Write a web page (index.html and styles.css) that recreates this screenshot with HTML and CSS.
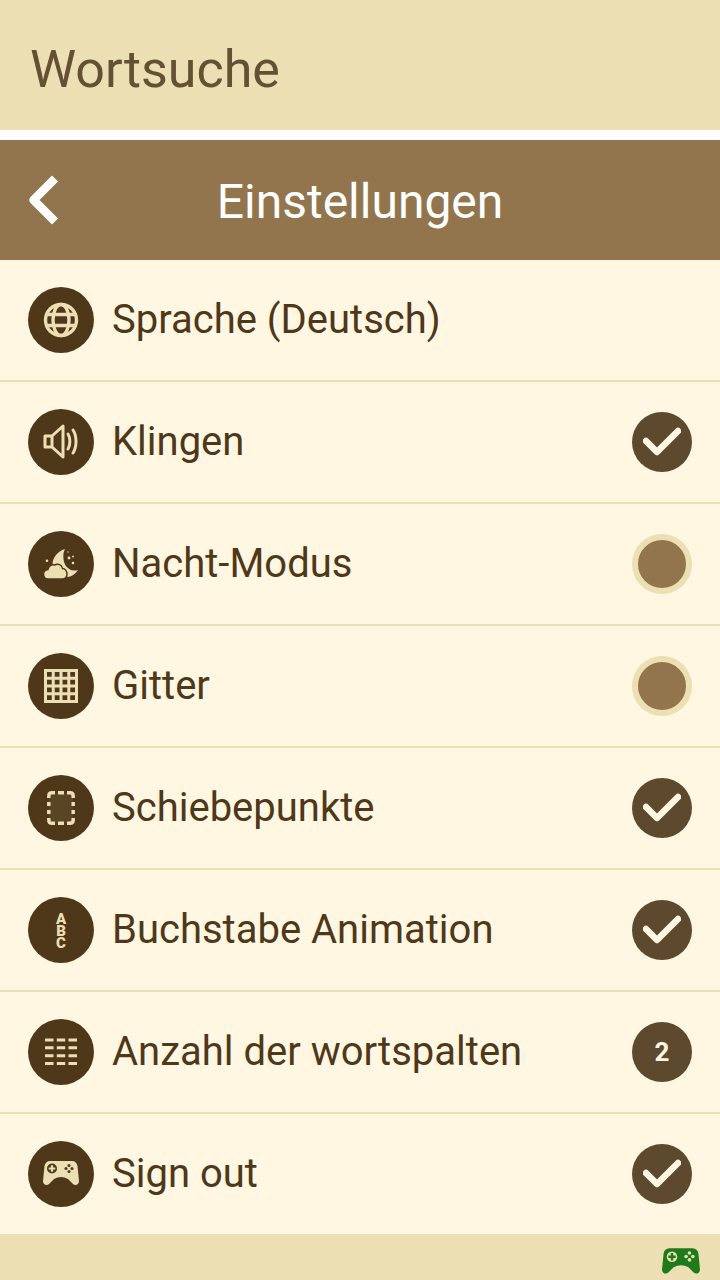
FILE: index.html
```html
<!DOCTYPE html>
<html lang="de">
<head>
<meta charset="UTF-8">
<meta name="viewport" content="width=device-width, initial-scale=1.0">
<title>Wortsuche</title>
<link rel="stylesheet" href="styles.css">
</head>
<body>

<div class="app-title">Wortsuche</div>

<div class="header">
    <svg class="back" width="36" height="52" viewBox="0 0 36 52"><path d="M31 4.500 L9.500 26 L31 47.500" fill="none" stroke="#fff" stroke-width="8.500" stroke-linejoin="round"/></svg>
    <div class="header-title">Einstellungen</div>
</div>

<div class="list">
    <div class="row">
        <div class="icon">
            <svg width="36" height="36" viewBox="0 0 36 36" fill="none" stroke="#ebdfb3" stroke-width="3.400">
                <circle cx="18" cy="18" r="15.500"/>
                <ellipse cx="18" cy="18" rx="8" ry="15.500"/>
                <path d="M3.500 12.500H32.500M3.500 23.500H32.500"/>
            </svg>
        </div>
        <div class="label">Sprache (Deutsch)</div>
    </div>
    <div class="row">
        <div class="icon">
            <svg width="36" height="36" viewBox="0 0 36 36" fill="none" stroke="#ebdfb3" stroke-width="3" stroke-linejoin="round" stroke-linecap="round">
                <path d="M2 12H9V23H2ZM9 12L20 2V33L9 23"/>
                <path d="M25 10C27.500 14 27.500 21 25 25M30 6C34 12 34 23 30 29"/>
            </svg>
        </div>
        <div class="label">Klingen</div>
        <div class="check"><svg width="38" height="30" viewBox="0 0 38 30"><path d="M3 14L14 25L35 4" fill="none" stroke="#fff7e2" stroke-width="6.500" stroke-linecap="round" stroke-linejoin="round"/></svg></div>
    </div>
    <div class="row">
        <div class="icon">
            <svg width="36" height="32" viewBox="0 0 36 32" fill="#ebdfb3">
                <path d="M22 1C13 4 8 12 10 20C13 29 27 34 35 22C28 24 23 20 21 14C20 9 20 5 22 1Z"/>
                <path d="M5 31C2 31 .500 29 .500 26C.500 23.500 2.500 22 5 21.500C5.500 18 8.500 16 11.500 17C15 15 19 17 19.500 20.500C22 20.500 24 23 24 26C24 29 22 31 19 31Z" stroke="#4f381a" stroke-width="1.500"/>
                <circle cx="4" cy="12.700" r="1.300"/><circle cx="26" cy="10" r="1.400"/><circle cx="30" cy="8.500" r=".9"/><circle cx="30" cy="15" r="1.300"/><circle cx="25" cy="4" r=".7"/>
            </svg>
        </div>
        <div class="label">Nacht-Modus</div>
        <div class="toggle-off"></div>
    </div>
    <div class="row">
        <div class="icon">
            <svg width="34" height="34" viewBox="0 0 34 34" fill="none" stroke="#ebdfb3" stroke-width="3">
                <path d="M1.500 1.500H32.500V32.500H1.500ZM9.250 1V33M17 1V33M24.750 1V33M1 9.250H33M1 17H33M1 24.750H33"/>
            </svg>
        </div>
        <div class="label">Gitter</div>
        <div class="toggle-off"></div>
    </div>
    <div class="row">
        <div class="icon">
            <svg width="28" height="34" viewBox="0 0 28 34" fill="none" stroke="#ebdfb3" stroke-width="3.500">
                <rect x="2" y="2" width="24" height="30" fill="#5a4426" stroke="none"/>
                <path d="M1.800 7V5Q1.800 1.800 5 1.800H8M11 1.800H17M20 1.800H23Q26.200 1.800 26.200 5V7M26.200 11V15M26.200 19V23M26.200 27V29Q26.200 32.200 23 32.200H20M17 32.200H11M8 32.200H5Q1.800 32.200 1.800 29V27M1.800 23V19M1.800 15V11"/>
            </svg>
        </div>
        <div class="label">Schiebepunkte</div>
        <div class="check"><svg width="38" height="30" viewBox="0 0 38 30"><path d="M3 14L14 25L35 4" fill="none" stroke="#fff7e2" stroke-width="6.500" stroke-linecap="round" stroke-linejoin="round"/></svg></div>
    </div>
    <div class="row">
        <div class="icon">
            <div class="abc">ABC</div>
        </div>
        <div class="label">Buchstabe Animation</div>
        <div class="check"><svg width="38" height="30" viewBox="0 0 38 30"><path d="M3 14L14 25L35 4" fill="none" stroke="#fff7e2" stroke-width="6.500" stroke-linecap="round" stroke-linejoin="round"/></svg></div>
    </div>
    <div class="row">
        <div class="icon">
            <svg width="34" height="28" viewBox="0 0 34 28" fill="#ebdfb3">
                <path d="M1 .5H9.500V3.500H1ZM12.800 .5H21.200V3.500H12.800ZM24.500 .5H33V3.500H24.500ZM1 8.300H9.500V11.300H1ZM12.800 8.300H21.200V11.300H12.800ZM24.500 8.300H33V11.300H24.500ZM1 16.200H9.500V19.200H1ZM12.800 16.200H21.200V19.200H12.800ZM24.500 16.200H33V19.200H24.500ZM1 24H9.500V27H1ZM12.800 24H21.200V27H12.800ZM24.500 24H33V27H24.500Z"/>
            </svg>
        </div>
        <div class="label">Anzahl der wortspalten</div>
        <div class="check count">2</div>
    </div>
    <div class="row last">
        <div class="icon">
            <svg width="36" height="26" viewBox="0 0 36 26">
                <path d="M7 0H29C32 0 34 2 34.500 5L36 20C36 24 32 25 30 23L25 18Q18 14 11 18L6 23C4 25 0 24 0 20L1.500 5C2 2 4 0 7 0Z" fill="#ebdfb3"/>
                <circle cx="9" cy="7.500" r="5" fill="#4f381a"/>
                <path d="M9 4.200V10.800M5.700 7.500H12.300" stroke="#ebdfb3" stroke-width="2.200"/>
                <g fill="#4f381a"><circle cx="26" cy="4.500" r="1.500"/><circle cx="26" cy="10.500" r="1.500"/><circle cx="23" cy="7.500" r="1.500"/><circle cx="29" cy="7.500" r="1.500"/></g>
            </svg>
        </div>
        <div class="label">Sign out</div>
        <div class="check"><svg width="38" height="30" viewBox="0 0 38 30"><path d="M3 14L14 25L35 4" fill="none" stroke="#fff7e2" stroke-width="6.500" stroke-linecap="round" stroke-linejoin="round"/></svg></div>
    </div>
</div>

<div class="footer">
    <svg width="38" height="28" viewBox="0 0 36 26">
        <path d="M7 0H29C32 0 34 2 34.500 5L36 20C36 24 32 25 30 23L25 18Q18 14 11 18L6 23C4 25 0 24 0 20L1.500 5C2 2 4 0 7 0Z" fill="#1f7a1c"/>
        <circle cx="9.500" cy="8" r="5" fill="#ebdfb3"/>
        <path d="M9.500 4.500V11.500M6 8H13" stroke="#1f7a1c" stroke-width="2.200"/>
        <g fill="#ebdfb3"><circle cx="26" cy="4.500" r="1.700"/><circle cx="26" cy="11" r="1.700"/><circle cx="22.800" cy="7.800" r="1.700"/><circle cx="29.200" cy="7.800" r="1.700"/></g>
    </svg>
</div>

</body>
</html>
```

FILE: styles.css
```css
body {
    margin: 0;
    width: 720px;
    height: 1280px;
    display: flex;
    flex-direction: column;
    background-color: #fff;
    font-family: Roboto, "Liberation Sans", sans-serif;
    overflow: hidden;
}
.app-title {
    height: 130px;
    box-sizing: border-box;
    padding: 9px 0 0 30px;
    display: flex;
    align-items: center;
    background-color: #ecdfb3;
    color: #655033;
    font-size: 52px;
}
.header {
    height: 120px;
    margin-top: 10px;
    display: flex;
    align-items: center;
    justify-content: center;
    position: relative;
    background-color: #92754d;
}
.back {
    position: absolute;
    left: 24px;
    top: 34px;
}
.header-title {
    color: #fff;
    font-size: 48px;
    padding-top: 2px;
}
.list {
    flex: 1;
    display: flex;
    flex-direction: column;
    background-color: #fff7e1;
}
.row {
    height: 122px;
    box-sizing: border-box;
    padding: 0 28px;
    display: flex;
    align-items: center;
    border-bottom: 2px solid #ecdfb3;
}
.row.last {
    height: 120px;
    border-bottom: 0;
}
.icon {
    width: 66px;
    height: 66px;
    border-radius: 50%;
    flex-shrink: 0;
    display: flex;
    align-items: center;
    justify-content: center;
    background-color: #4f381a;
}
.label {
    flex: 1;
    margin-left: 18px;
    color: #4f381a;
    font-size: 40px;
    padding-bottom: 2px;
}
.check {
    width: 60px;
    height: 60px;
    border-radius: 50%;
    display: flex;
    align-items: center;
    justify-content: center;
    background-color: #5d4a2e;
}
.count {
    color: #fff7e2;
    font-size: 26px;
    font-weight: bold;
}
.toggle-off {
    width: 48px;
    height: 48px;
    border: 6px solid #ecdfb3;
    border-radius: 50%;
    background-color: #92754d;
}
.abc {
    color: #ebdfb3;
    font-size: 15px;
    font-weight: 900;
    writing-mode: vertical-rl;
    text-orientation: upright;
    letter-spacing: -6px;
    padding-bottom: 5px;
}
.footer {
    height: 46px;
    box-sizing: border-box;
    padding: 10px 20px 0 0;
    display: flex;
    align-items: center;
    justify-content: flex-end;
    background-color: #ecdfb3;
}
```
